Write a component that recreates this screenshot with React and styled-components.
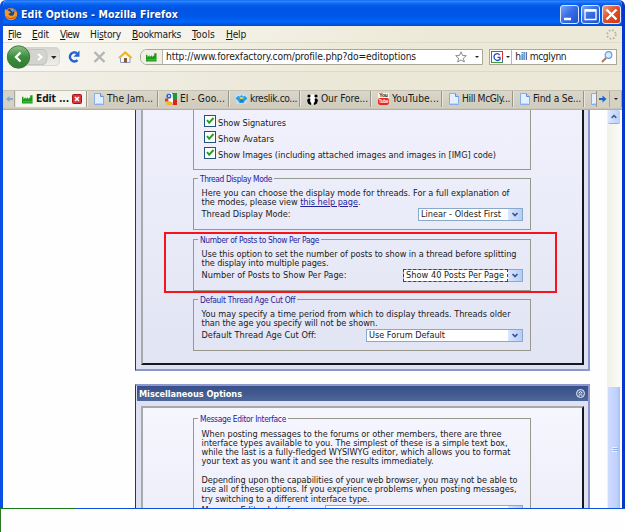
import React, { useLayoutEffect, useRef, useState } from 'react';
import styled, { createGlobalStyle, css } from 'styled-components';

const GlobalStyle = createGlobalStyle`
  * {
    box-sizing: border-box;
  }

  body {
    margin: 0;
    background: #fefefe;
    overflow: hidden;
  }
`;

const chromeFont = css`
  font-family: 'DejaVu Sans Condensed', 'DejaVu Sans', sans-serif;
  font-stretch: condensed;
  font-size: 10.2px;
`;

const Screen = styled.div`
  width: 625px;
  height: 532px;
  display: flex;
  flex-direction: column;
  color: #1a1a1a;
  ${chromeFont}
`;

const Window = styled.div`
  height: 508px;
  display: flex;
  flex-direction: column;
  border-left: 3px solid #0a50e4;
  border-right: 3px solid #0636cc;
  border-radius: 6px 6px 0 0;
  background: #ece9d8;
  overflow: hidden;
`;

const TitleBar = styled.div`
  height: 26px;
  flex: none;
  margin: 0 -3px;
  padding: 2px 4px 0 4px;
  display: flex;
  align-items: center;
  background: linear-gradient(#0a5be8 0, #2e8bff 1px, #0a62f0 4px, #0054e3 8px, #0058ea 17px, #0066fb 22px, #0049c8 26px);
`;

const Title = styled.div`
  flex: 1;
  margin-left: 3px;
  font-family: 'DejaVu Sans Condensed', 'DejaVu Sans', sans-serif;
  font-size: 10.5px;
  font-weight: bold;
  line-height: 14px;
  color: #fff;
  text-shadow: 1px 1px 1px #0a2e8c;
`;

const WinButton = styled.div`
  width: 19px;
  height: 19px;
  margin-left: 2px;
  border: 1px solid #dfe8fb;
  border-radius: 3px;
  background: ${({ $close }) => ($close
    ? 'linear-gradient(135deg, #f09a7c, #e2502a 45%, #c63a12)'
    : 'linear-gradient(135deg, #7aa4f6, #3a6fe6 45%, #1e50d0)')};

  svg {
    display: block;
  }
`;

const MenuBar = styled.div`
  height: 17px;
  flex: none;
  display: flex;
  align-items: center;
  gap: 11px;
  padding: 0 5px;
  border-bottom: 1px solid #e0ddcc;
  background: linear-gradient(90deg, #fbfaf7, #ece9d8 70%);
`;

const Throbber = styled.svg`
  margin-left: auto;
`;

const NavBar = styled.div`
  height: 28px;
  flex: none;
  display: flex;
  align-items: center;
  padding: 0 5px 0 3px;
  background: linear-gradient(90deg, #f8f7f2, #ece9d8 60%);
`;

const NavIcons = styled.svg`
  flex: none;
  display: block;
`;

const Field = styled.div`
  width: ${({ $width }) => $width}px;
  height: 16px;
  margin-left: ${({ $gap }) => $gap}px;
  display: flex;
  align-items: center;
  border: 1px solid #a9a798;
  border-radius: ${({ $round }) => ($round ? '7px 0 0 7px' : '0')};
  background: #fff;
  overflow: hidden;
`;

const FieldIcon = styled.div`
  width: ${({ $width }) => $width}px;
  height: 14px;
  display: flex;
  align-items: center;
  justify-content: center;
  gap: 3px;
  margin-right: 3px;
  border-right: 1px solid #b8b6a8;
  background: ${({ $tint }) => ($tint ? '#f1efe5' : '#fff')};
`;

const FieldEnd = styled.div`
  margin-left: auto;
  padding-right: 3px;
  display: flex;
  align-items: center;
  gap: 8px;
`;

const Caret = styled.i`
  border: 2px solid transparent;
  border-top-color: #222;
  border-bottom: 0;
`;

const BookmarkBar = styled.div`
  height: 20px;
  flex: none;
  border-top: 1px solid #dcd9c8;
  border-bottom: 1px solid #c4c1b2;
  background: linear-gradient(90deg, #f1efe7, #ebe8d8 50%);
`;

const TabBar = styled.div`
  height: 16px;
  flex: none;
  display: flex;
  background: #d5d2c4;
`;

const TabArrow = styled.div`
  width: ${({ $width }) => $width}px;
  flex: none;
  display: flex;
  align-items: center;
  justify-content: center;
  border-right: 1px solid #aaa79a;
`;

const Tab = styled.div`
  width: ${({ $width }) => $width || 71}px;
  flex: none;
  display: flex;
  align-items: center;
  gap: 3px;
  padding-left: 6px;
  border-right: 1px solid #98968a;
  border-left: 1px solid #e9e7dc;
  background: ${({ $active }) => ($active ? '#f5f4ec' : 'linear-gradient(#dad7ca, #cfccbe)')};
  font-weight: ${({ $active }) => ($active ? 'bold' : 'normal')};
  overflow: hidden;

  svg {
    flex: none;
  }
`;

const TabEdge = styled.div`
  height: 3px;
  flex: none;
  background: linear-gradient(#d9d6c8, #c8c5b4 50%, #a7a596);
`;

const Viewport = styled.div`
  height: 398px;
  display: flex;
  background: #fefefe;
  overflow: hidden;
`;

const Page = styled.div`
  position: relative;
  flex: 1;
  padding-left: 132px;
  font-family: 'DejaVu Sans', Verdana, sans-serif;
  font-size: 8.2px;
  font-stretch: normal;
`;

const Panel = styled.div`
  width: 455px;
  border: solid #8d97cb;
  border-width: ${({ $first }) => ($first ? '0 2px 2px 1px' : '2px 2px 0 1px')};
  border-left-color: #20308c;
  padding: ${({ $first }) => ($first ? '0 4px 4px 5px' : '0')};
  margin-bottom: 13px;
  background: #dde1f2;
`;

const PanelHeader = styled.div`
  height: 15px;
  margin-left: 1px;
  padding: 0 2px 0 2px;
  display: flex;
  align-items: center;
  justify-content: space-between;
  background: linear-gradient(#38508a, #42598f 50%, #4d689c);
  color: #fff;
  font-weight: bold;
`;

const Inset = styled.div`
  height: ${({ $height }) => $height}px;
  margin: ${({ $margin }) => $margin || 0};
  padding-left: 50px;
  border: solid #16161e;
  border-width: ${({ $first }) => ($first ? '0 2px 2px 2px' : '2px 2px 0 2px')};
  border-left-color: #aaa9aa;
  border-top-color: #aaa9aa;
  background: ${({ $first }) => ($first
    ? 'linear-gradient(#f1f1fd, #e1e4f3)'
    : 'linear-gradient(#f6f6ff, #eeeefa)')};
`;

const CheckGroup = styled.div`
  width: 338px;
  height: 60px;
  margin-bottom: 4px;
  padding: 5px 0 0 10px;
  display: flex;
  flex-direction: column;
  gap: 4px;
  border: 1px solid #98988c;
  border-top: 0;
`;

const CheckRow = styled.div`
  height: 12px;
  display: flex;
  gap: 2px;
`;

const Checkbox = styled.svg`
  width: 12px;
  height: 12px;
  flex: none;
  border: 1px solid #24527e;
  background: #fff;
`;

const Fieldset = styled.fieldset`
  width: 338px;
  min-width: 0;
  height: ${({ $height }) => $height || 56}px;
  margin: 0 0 ${({ $after }) => $after || 0}px;
  padding: ${({ $top }) => $top || 5.5}px 7px 0 7.5px;
  border: 1px solid #98988c;
`;

const Legend = styled.legend`
  height: 9px;
  margin-left: -3.5px;
  padding: 0 2px;
  line-height: 11px;
  color: #22229c;
  font-family: 'DejaVu Sans Condensed', 'DejaVu Sans', sans-serif;
  font-size: 8.4px;
`;

const FormRow = styled.div`
  height: 13px;
  margin-top: 0.9px;
  display: flex;
  justify-content: space-between;
`;

const Select = styled.div`
  width: ${({ $width }) => $width}px;
  height: 13px;
  display: flex;
  align-items: center;
  justify-content: space-between;
  border: 1px solid #8aa9c8;
  background: #fff;

  svg {
    flex: none;
    background: linear-gradient(90deg, #dbe6fe, #b4cdfb);
  }
`;

const SelectText = styled.div`
  flex: 1;
  height: 13px;
  margin-left: ${({ $focus }) => ($focus ? -1 : 0)}px;
  padding-left: ${({ $focus }) => ($focus ? 2 : 2)}px;
  border: ${({ $focus }) => ($focus ? '1px dashed #444' : '1px solid transparent')};
  border-left-width: ${({ $focus }) => ($focus ? 1 : 0)}px;
`;

const Spacer = styled.div`
  height: ${({ $height }) => $height || 9.3}px;
`;

const HelpLink = styled.span`
  color: #22229c;
  text-decoration: underline;
`;

const Highlight = styled.div`
  position: absolute;
  left: 161px;
  top: 122px;
  width: 393px;
  height: 61px;
  border: 2px solid #f8131b;
`;

const Scrollbar = styled.div`
  width: 15px;
  display: flex;
  flex-direction: column;
  justify-content: space-between;
  padding: 0 1px;
  background: linear-gradient(90deg, #f1f0e9, #fcfcfa);
`;

const ScrollButton = styled.svg`
  width: 12px;
  height: 14px;
  border-radius: 2px;
  border-bottom: 1px solid #8fabdc;
  background: linear-gradient(90deg, #dce7ff, #b9d0fb);
`;

const Thumb = styled.svg`
  width: 12px;
  height: 121px;
  background: linear-gradient(90deg, #cfdcfe, #bfd2fd 70%, #a9c0f5);
`;

const Desktop = styled.div`
  flex: 1;
  border-left: 1px solid #2a7a2a;
  background: #fefefe;
`;

const WindowEdge = styled.div`
  height: 1px;
  flex: none;
  background: linear-gradient(90deg, #197a19 76px, #0c52dc 76px);
`;

const LineBox = styled.div`
  flex: none;
  height: ${({ $height }) => $height || 9.3}px;
  line-height: ${({ $height }) => $height || 9.3}px;
  white-space: pre;
`;

// Spreads the letters so that the line takes the given width
function Line({ width, height, children }) {
  const ref = useRef(null);
  const [spacing, setSpacing] = useState(0);

  useLayoutEffect(() => {
    const el = ref.current;
    const natural = el.getBoundingClientRect().width;
    setSpacing((width - natural) / el.textContent.length);
  }, []);

  return (
    <LineBox $height={height} style={{ width, letterSpacing: spacing }}>
      <span ref={ref}>{children}</span>
    </LineBox>
  );
}

const Factory = () => (
  <svg width="11" height="10" viewBox="0 0 12 10">
    <path d="M0 10V2.500h1.500V5L4 3v2l2.500-2v2L9 3.200V1h2.500v9z" fill="#1c9a1c" />
    <path d="M1 8h10" stroke="#75cf5f" strokeWidth=".7" />
  </svg>
);

const Doc = () => (
  <svg width="10" height="12" viewBox="0 0 10 12">
    <path d="M.5.5h6l3 3v8h-9z" fill="#e4efff" stroke="#86aeea" />
    <path d="M6.500.5v3h3" fill="#b9d2fa" stroke="#5e8fdd" />
    <path d="M1.500 10.500h7" stroke="#bcd4fa" />
  </svg>
);

const GoogleIcon = () => (
  <svg width="12" height="12" viewBox="0 0 12 12">
    <path d="M3 0h9v12H3z" fill="#fff" />
    <path d="M7 0h5v7H8z" fill="#189a3c" />
    <path d="M0 5.500h3.500v3H0z" fill="#d33" />
    <path d="M8 7h4v5H7.500z" fill="#d8261c" />
    <path d="M1 9l3-1 3 1v3H2z" fill="#f2b921" />
    <circle cx="4" cy="3" r="2.600" fill="#2e61cc" />
    <path d="M7 1v4.500M3.500 7C7 5.500 8 7 7 9" fill="none" stroke="#fff" strokeWidth="1.200" />
    <circle cx="4" cy="3" r=".9" fill="#fff" />
  </svg>
);

const Kreslik = () => (
  <svg width="11" height="10" viewBox="0 0 11 10">
    <path d="M0 0h11v10H0z" fill="#c6dcea" />
    <path d="M0 4l2-2 2 .5L5.500 1 7 2.500 9 2l2 2v1L9 6.500 7.500 9h-4L2 6.500 0 5z" fill="#2a9be0" />
    <path d="M3.500 3h4L7 5H4z" fill="#d5c95a" />
    <path d="M4 7h3" stroke="#0a5a9c" />
  </svg>
);

const Panda = () => (
  <svg width="11" height="11" viewBox="0 0 11 11">
    <ellipse cx="5.500" cy="5.500" rx="4.500" ry="5" fill="#fff" />
    <circle cx="2" cy="2" r="1.600" />
    <circle cx="9" cy="2" r="1.600" />
    <path d="M0 6l2-2 1.500 1L3 7l1.500 3-1 1L1 9.500zM11 6L9 4 7.500 5 8 7l-1.500 3 1 1L10 9.500z" />
  </svg>
);

const TubeIcon = styled.div`
  width: 11px;
  flex: none;
  font-family: 'Liberation Sans', sans-serif;
  font-size: 5px;
  font-weight: bold;
  line-height: 5px;
  letter-spacing: -0.2px;
  text-align: center;
  background: #f6f5f0;

  span {
    display: block;
    height: 7px;
    line-height: 7px;
    border-radius: 2px;
    background: #e02a26;
    color: #fff;
    font-size: 4.5px;
  }
`;

const CloseTab = () => (
  <svg width="10" height="10" viewBox="0 0 10 10">
    <rect x=".5" y=".5" width="9" height="9" rx="1" fill="#d8373d" stroke="#a8141c" />
    <path d="M3 3l4 4M7 3l-4 4" stroke="#fff" strokeWidth="1.500" />
  </svg>
);

const Arrow = ({ flip }) => (
  <svg width="8" height="8" viewBox="0 0 8 8">
    <path
      d={flip ? 'M8 3H4.500V1L1 4l3.500 3V5H8z' : 'M0 3h3.500V.5L7.500 4l-4 3.500V5H0z'}
      fill={flip ? '#86a9d4' : '#1664d8'}
    />
  </svg>
);

const SelectArrow = () => (
  <svg width="14" height="11" viewBox="0 0 14 11">
    <path d="M4.500 4L7 6.500 9.500 4" fill="none" stroke="#3f5585" strokeWidth="1.700" />
  </svg>
);

const Firefox = () => (
  <svg width="14" height="14" viewBox="0 0 14 14">
    <circle cx="7" cy="7" r="6.200" fill="#e87a1a" />
    <circle cx="7.500" cy="5.500" r="4" fill="#24468e" />
    <path d="M6 2c2-1 4 0 4.500 1.500L8.500 5z" fill="#6ba9e0" />
    <path d="M1 2l2 1.500 2 .5 2 1.500-2.500 1.200C5 9 8 9.500 9.500 8c1-1 1-3 .5-4.500 2 1 3 2.500 3 4.500-1 4-4 5.500-7 5C2 12 0 8 1 2z" fill="#f39a24" />
    <path d="M2.500 9.500c2 2.500 6 3 9 0" fill="none" stroke="#c9430e" />
  </svg>
);

const menus = [
  ['', 'F', 'ile', 13],
  ['', 'E', 'dit', 17],
  ['', 'V', 'iew', 19],
  ['Hi', 's', 'tory', 31],
  ['', 'B', 'ookmarks', 49],
  ['', 'T', 'ools', 23],
  ['', 'H', 'elp', 20],
];

const tabs = [
  { icon: <Doc />, label: 'The Jam...', width: 46 },
  { icon: <GoogleIcon />, label: 'EI - Goo...', width: 45 },
  { icon: <Kreslik />, label: 'kreslik.co...', width: 47 },
  { icon: <Panda />, label: 'Our Fore...', width: 47 },
  { icon: <TubeIcon>You<span>Tube</span></TubeIcon>, label: 'YouTube...', width: 47 },
  { icon: <Doc />, label: 'Hill McGly...', width: 48 },
  { icon: <Doc />, label: 'Find a Se...', width: 48 },
];

const checks = [
  ['Show Signatures', 68],
  ['Show Avatars', 56],
  ['Show Images (including attached images and images in [IMG] code)', 278],
];

const Toolbar = () => (
  <NavBar>
    <NavIcons width="134" height="26" viewBox="6 44 134 26">
      <defs>
        <linearGradient id="back" x2="0" y2="1">
          <stop stopColor="#8fc08a" />
          <stop offset=".5" stopColor="#3b8e3c" />
          <stop offset="1" stopColor="#2f7d33" />
        </linearGradient>
        <linearGradient id="pill" x2="0" y2="1">
          <stop stopColor="#d6d5cf" />
          <stop offset="1" stopColor="#efeee9" />
        </linearGradient>
      </defs>
      <path d="M18 47.500h37q4.500 0 4.500 5v8q0 5-4.500 5H18z" fill="url(#pill)" stroke="#d6d5cf" />
      <path d="M28 49.500h15q4 0 4 7.500t-4 7.500H28z" fill="#d3d3d0" stroke="#c2c2be" />
      <circle cx="18.500" cy="57" r="11.200" fill="url(#back)" stroke="#3c7a3c" />
      <path d="M20.500 52.500L16 57l4.500 4.500" fill="none" stroke="#fff" strokeWidth="2.400" />
      <path d="M38 54l3.500 3-3.500 3" fill="none" stroke="#fff" strokeWidth="2" />
      <path d="M51 56h5.500l-2.700 3z" fill="#222" />
      <path d="M77 53.200a4.500 4.500 0 1 0 .5 7" fill="none" stroke="#2462ce" strokeWidth="2.500" />
      <path d="M79.500 50.500v6.300h-6z" fill="#2462ce" />
      <path d="M94.500 52l10 10M104.500 52l-10 10" stroke="#b4b4b2" strokeWidth="2.400" />
      <path d="M120.500 57v5.500h9.500V57l-4.700-4z" fill="#f7f7f9" stroke="#8e9bc0" />
      <path d="M124 58h3v4.500h-3z" fill="#7e5b3c" />
      <path d="M119 58l6.300-5.500 6.300 5.500" fill="none" stroke="#f0b32c" strokeWidth="2.200" />
    </NavIcons>
    <Field $width={344} $gap={0} $round>
      <FieldIcon $width={22} $tint><Factory /></FieldIcon>
      <Line width={250} height={14}>http://www.forexfactory.com/profile.php?do=editoptions</Line>
      <FieldEnd>
        <svg width="12" height="12" viewBox="0 0 12 12">
          <path d="M6 .8l1.500 3.600 3.800.3-2.900 2.500.9 3.800L6 9l-3.300 2 .9-3.800L.7 4.700l3.800-.3z" fill="#fff" stroke="#8b8b8b" />
        </svg>
        <Caret />
      </FieldEnd>
    </Field>
    <Field $width={128} $gap={6}>
      <FieldIcon $width={22}>
        <svg width="12" height="12" viewBox="0 0 12 12">
          <rect x=".5" y=".5" width="11" height="11" fill="#fff" stroke="#3568c8" />
          <path d="M11.500 0v8" stroke="#d33" />
          <path d="M0 11.500h12" stroke="#3a9b3a" />
          <path d="M8.700 4C7 1.800 3 2.500 3 6s4 4.300 6 2.500V6.300H6.500" fill="none" stroke="#2748b8" strokeWidth="1.300" />
        </svg>
        <Caret />
      </FieldIcon>
      <Line width={51} height={14}>hill mcglynn</Line>
      <FieldEnd>
        <svg width="12" height="12" viewBox="0 0 12 12">
          <path d="M5 7l-4 4" stroke="#b0784a" strokeWidth="2" />
          <circle cx="7.500" cy="4" r="3.300" fill="#d6ecff" stroke="#6b9bd0" strokeWidth="1.200" />
        </svg>
      </FieldEnd>
    </Field>
  </NavBar>
);

export default function App() {
  return (
    <Screen>
      <GlobalStyle />
      <Window>
        <TitleBar>
          <Firefox />
          <Title>
            <Line width={157} height={16}>Edit Options - Mozilla Firefox</Line>
          </Title>
          <WinButton>
            <svg width="17" height="17"><path d="M3 13h7" stroke="#fff" strokeWidth="2.500" /></svg>
          </WinButton>
          <WinButton>
            <svg width="17" height="17">
              <path d="M3 4h11v9.500H3z" fill="none" stroke="#fff" strokeWidth="1.300" />
              <path d="M3 4.500h11" stroke="#fff" strokeWidth="2.500" />
            </svg>
          </WinButton>
          <WinButton $close>
            <svg width="17" height="17"><path d="M3.500 3.500l10 10M13.500 3.500l-10 10" stroke="#fff" strokeWidth="2.400" /></svg>
          </WinButton>
        </TitleBar>
        <MenuBar>
          {menus.map(([before, key, after, width]) => (
            <Line key={key} width={width} height={15}>{before}<u>{key}</u>{after}</Line>
          ))}
          <Throbber width="11" height="11" viewBox="0 0 11 11">
            <circle cx="5.500" cy="5.500" r="4.300" fill="none" stroke="#b5b3a8" strokeWidth="1.800" strokeDasharray="1.700 1.680" />
          </Throbber>
        </MenuBar>
        <Toolbar />
        <BookmarkBar />
        <TabBar>
          <TabArrow $width={12}><Arrow flip /></TabArrow>
          <Tab $active $width={72}>
            <Factory />
            <Line width={33} height={16}>Edit ...</Line>
            <CloseTab />
          </Tab>
          {tabs.map(({ icon, label, width }) => (
            <Tab key={label}>
              {icon}
              <Line width={width} height={16}>{label}</Line>
            </Tab>
          ))}
          <Tab $width={13}><Doc /></Tab>
          <TabArrow $width={13}><Arrow /></TabArrow>
          <TabArrow $width={12}><Caret /></TabArrow>
        </TabBar>
        <TabEdge />
        <Viewport>
          <Page>
            <Panel $first>
              <Inset $first $height={255}>
                <CheckGroup>
                  {checks.map(([label, width]) => (
                    <CheckRow key={label}>
                      <Checkbox viewBox="0 0 10 10">
                        <path d="M2 4l2.200 2.800L8.500 2" fill="none" stroke="#21a121" strokeWidth="2" />
                      </Checkbox>
                      <Line width={width} height={17}>{label}</Line>
                    </CheckRow>
                  ))}
                </CheckGroup>
                <Fieldset $after={5}>
                  <Legend><Line width={72} height={11}>Thread Display Mode</Line></Legend>
                  <Line width={308}>Here you can choose the display mode for threads. For a full explanation of</Line>
                  <Line width={159}>the modes, please view <HelpLink>this help page</HelpLink>.</Line>
                  <FormRow>
                    <Line width={89} height={12}>Thread Display Mode:</Line>
                    <Select $width={105}>
                      <SelectText>
                        <Line width={80} height={11}>Linear - Oldest First</Line>
                      </SelectText>
                      <SelectArrow />
                    </Select>
                  </FormRow>
                </Fieldset>
                <Fieldset $after={4}>
                  <Legend><Line width={119} height={11}>Number of Posts to Show Per Page</Line></Legend>
                  <Line width={315}>Use this option to set the number of posts to show in a thread before splitting</Line>
                  <Line width={127}>the display into multiple pages.</Line>
                  <FormRow>
                    <Line width={145} height={12}>Number of Posts to Show Per Page:</Line>
                    <Select $width={120}>
                      <SelectText $focus>
                        <Line width={98} height={11}>Show 40 Posts Per Page</Line>
                      </SelectText>
                      <SelectArrow />
                    </Select>
                  </FormRow>
                </Fieldset>
                <Fieldset>
                  <Legend><Line width={95} height={11}>Default Thread Age Cut Off</Line></Legend>
                  <Line width={309}>You may specify a time period from which to display threads. Threads older</Line>
                  <Line width={176}>than the age you specify will not be shown.</Line>
                  <FormRow>
                    <Line width={115} height={12}>Default Thread Age Cut Off:</Line>
                    <Select $width={157}>
                      <SelectText>
                        <Line width={76} height={11}>Use Forum Default</Line>
                      </SelectText>
                      <SelectArrow />
                    </Select>
                  </FormRow>
                </Fieldset>
              </Inset>
            </Panel>
            <Panel>
              <PanelHeader>
                <Line width={103} height={16}>Miscellaneous Options</Line>
                <svg width="11" height="11" viewBox="0 0 11 11">
                  <circle cx="5.500" cy="5.500" r="4" fill="#5a709f" stroke="#e6ebf5" />
                  <path d="M3.700 5.200l1.800-1.700 1.800 1.700M3.700 7.700L5.500 6l1.800 1.700" fill="none" stroke="#fff" />
                </svg>
              </PanelHeader>
              <Inset $height={110} $margin="5px 4px 0 5px">
                <Spacer $height={6} />
                <Fieldset $height={120} $top={6.5}>
                  <Legend><Line width={86} height={11}>Message Editor Interface</Line></Legend>
                  <Line width={300}>When posting messages to the forums or other members, there are three</Line>
                  <Line width={306}>interface types available to you. The simplest of these is a simple text box,</Line>
                  <Line width={309}>while the last is a fully-fledged WYSIWYG editor, which allows you to format</Line>
                  <Line width={232}>your text as you want it and see the results immediately.</Line>
                  <Spacer />
                  <Line width={316}>Depending upon the capabilities of your web browser, you may not be able to</Line>
                  <Line width={315}>use all of these options. If you experience problems when posting messages,</Line>
                  <Line width={168}>try switching to a different interface type.</Line>
                  <FormRow>
                    <Line width={106} height={11}>Message Editor Interface:</Line>
                    <Select $width={198}>
                      <SelectText />
                      <SelectArrow />
                    </Select>
                  </FormRow>
                </Fieldset>
              </Inset>
            </Panel>
            <Highlight />
          </Page>
          <Scrollbar>
            <ScrollButton viewBox="0 0 12 14">
              <path d="M3.500 8.500L6 6l2.500 2.500" fill="none" stroke="#3f5585" strokeWidth="1.600" />
            </ScrollButton>
            <Thumb viewBox="0 0 12 121">
              <path d="M4 60.500h5M4 62.500h5M4 64.500h5" stroke="#eef4fe" />
              <path d="M5 61.500h5M5 63.500h5" stroke="#8fabe8" />
            </Thumb>
          </Scrollbar>
        </Viewport>
      </Window>
      <WindowEdge />
      <Desktop />
    </Screen>
  );
}
